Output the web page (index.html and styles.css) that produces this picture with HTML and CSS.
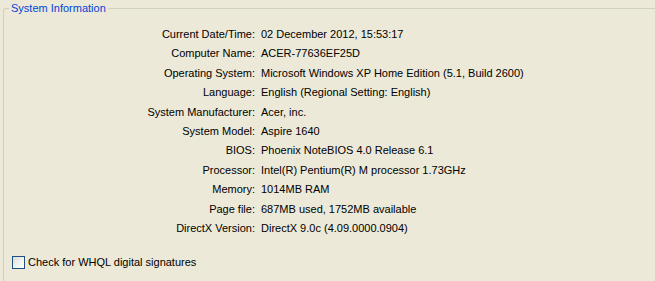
FILE: index.html
```html
<!DOCTYPE html>
<html lang="en">
<head>
	<meta charset="UTF-8">
	<title>System Information</title>
	<link rel="stylesheet" href="styles.css">
</head>
<body>
	<fieldset class="group">
		<legend>System Information</legend>
		<dl class="info">
			<dt>Current Date/Time:</dt><dd>02 December 2012, 15:53:17</dd>
			<dt>Computer Name:</dt><dd>ACER-77636EF25D</dd>
			<dt>Operating System:</dt><dd>Microsoft Windows XP Home Edition (5.1, Build 2600)</dd>
			<dt>Language:</dt><dd>English (Regional Setting: English)</dd>
			<dt>System Manufacturer:</dt><dd>Acer, inc.</dd>
			<dt>System Model:</dt><dd>Aspire 1640</dd>
			<dt>BIOS:</dt><dd>Phoenix NoteBIOS 4.0 Release 6.1</dd>
			<dt>Processor:</dt><dd>Intel(R) Pentium(R) M processor 1.73GHz</dd>
			<dt>Memory:</dt><dd>1014MB RAM</dd>
			<dt>Page file:</dt><dd>687MB used, 1752MB available</dd>
			<dt>DirectX Version:</dt><dd>DirectX 9.0c (4.09.0000.0904)</dd>
		</dl>
		<label class="check"><span class="box"></span>Check for WHQL digital signatures</label>
	</fieldset>
</body>
</html>
```

FILE: styles.css
```css
* {margin:0;padding:0;box-sizing:border-box;}
html, body {height:100%;}
body {background-color:#ece9d8;overflow:hidden;font-family:"Liberation Sans", Arial, sans-serif;font-size:11px;color:#000;}

.group {margin:0 0 0 3px;height:100%;border:1px solid #d0d0bf;border-right:none;border-bottom:none;border-radius:3px 0 0 0;padding:0;}
.group > legend {margin-left:5px;padding:0 2px;color:#0046d5;font-size:11px;line-height:17px;}

.info {display:grid;grid-template-columns:251px auto;column-gap:6px;padding-top:8px;}
.info dt, .info dd {height:19.4px;line-height:19.4px;white-space:nowrap;}
.info dt {text-align:right;}

.check {display:flex;align-items:center;gap:3px;margin:18px 0 0 8px;line-height:13px;}
.box {width:13px;height:13px;border:1px solid #1c5180;background:linear-gradient(135deg, #dcdcd7 0%, #f4f4f0 60%, #fff 100%);}
```
